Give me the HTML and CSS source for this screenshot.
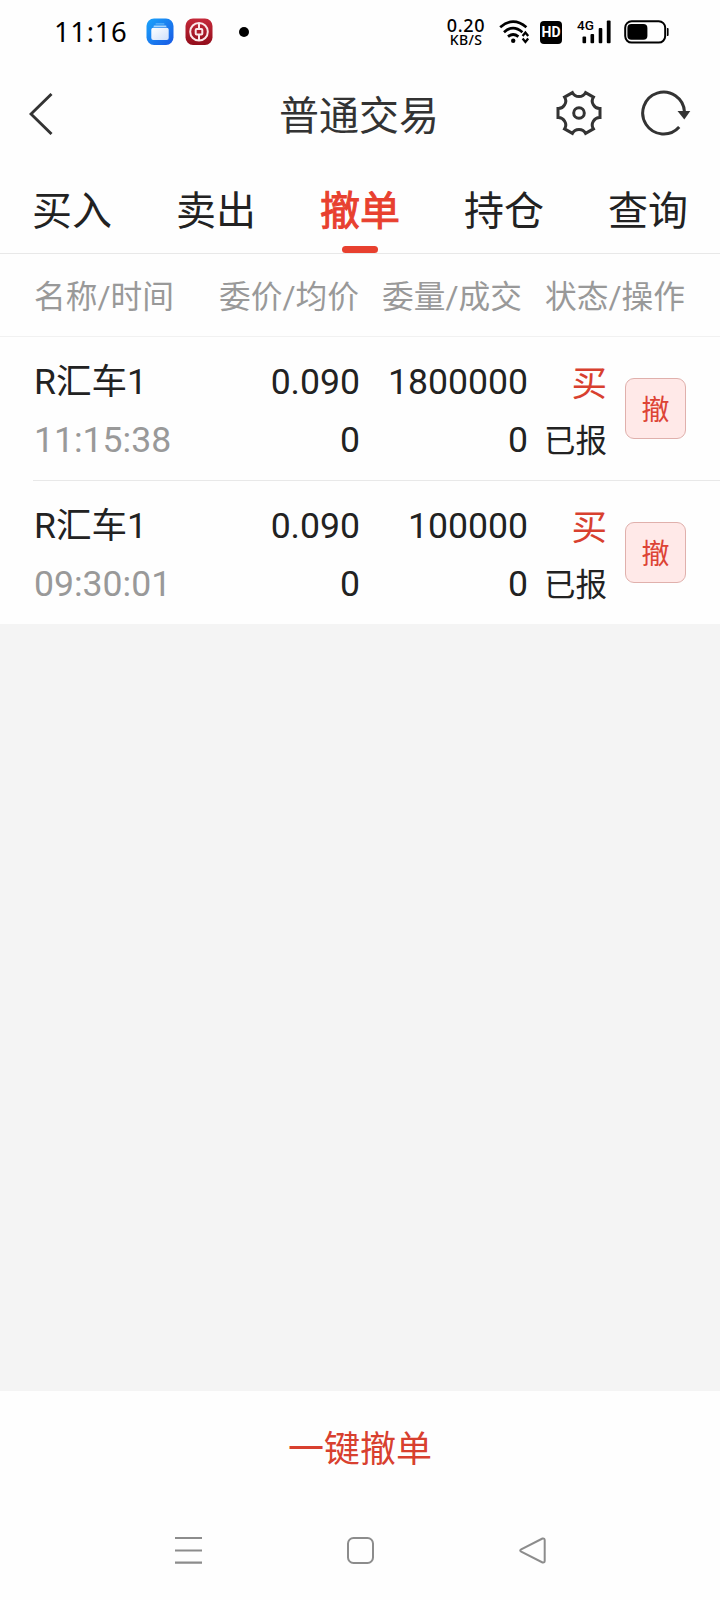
FILE: index.html
```
<!DOCTYPE html>
<html lang="zh-CN">
<head>
<meta charset="utf-8">
<title>普通交易</title>
<link rel="stylesheet" href="styles.css">
</head>
<body>
<div class="screen">
  <div class="status">
    <span class="clock">11:16</span>
    <svg class="app-icon files" width="28" height="28" viewBox="0 0 28 28">
      <defs>
        <linearGradient id="blue" x1="0" y1="0" x2="1" y2="1"><stop offset="0" stop-color="#1ba4fb"/><stop offset="1" stop-color="#1858e4"/></linearGradient>
        <linearGradient id="paper" x1="0" y1="0" x2="1" y2="1"><stop offset="0" stop-color="#fff"/><stop offset="1" stop-color="#cfe0fb"/></linearGradient>
      </defs>
      <rect x="0.5" y="0.5" width="27" height="26.5" rx="7.5" fill="url(#blue)"/>
      <rect x="9.5" y="5.3" width="9" height="1.2" rx="0.6" fill="#5fb6fb"/>
      <rect x="7.5" y="7.4" width="13" height="1.7" rx="0.8" fill="#a9d7fd"/>
      <rect x="5.3" y="9.8" width="17.4" height="12.2" rx="2" fill="url(#paper)"/>
    </svg>
    <svg class="app-icon bank" width="28" height="28" viewBox="0 0 28 28">
      <defs><linearGradient id="red" x1="0" y1="0" x2="0" y2="1"><stop offset="0" stop-color="#c5293a"/><stop offset="1" stop-color="#920d1b"/></linearGradient></defs>
      <rect x="0.5" y="0.5" width="27" height="26.5" rx="7.5" fill="url(#red)"/>
      <g fill="none" stroke="#fbe9ea">
        <circle cx="14" cy="13.8" r="8.8" stroke-width="2"/>
        <rect x="10.7" y="11" width="6.6" height="5.600" rx="1" stroke-width="2"/>
        <path d="M14 5v5.9M14 16.7v5.9" stroke-width="2"/>
      </g>
    </svg>
    <span class="dot"></span>
    <span class="speed"><b class="rate">0.20</b><b class="unit">KB/S</b></span>
    <svg class="wifi" width="32" height="26" viewBox="0 0 32 26">
      <g fill="none" stroke="#000" stroke-width="2.7">
        <path d="M1.2 8.2Q14 -3 27.4 8.2"/>
        <path d="M5 13.2Q14 5 23.4 13.2"/>
        <path d="M9 17.6Q14 13.4 19.4 17.6"/>
      </g>
      <circle cx="14.2" cy="21.8" r="2.2"/>
      <path d="M23.6 17l2.800-3.400 2.800 3.400M23.600 19.600l2.800 3.400 2.800-3.400" fill="none" stroke="#000" stroke-width="2.300"/>
    </svg>
    <span class="hd">HD</span>
    <span class="signal">
      <svg width="34" height="24" viewBox="0 0 34 24"><g><rect x="5.500" y="16.600" width="3.600" height="6.600" rx="1"/><rect x="13.500" y="14" width="3.600" height="9.200" rx="1"/><rect x="21.700" y="8" width="3.600" height="15.200" rx="1"/><rect x="29.800" y="0.400" width="3.800" height="22.800" rx="1"/></g></svg>
      <span class="gen">4G</span>
    </span>
    <svg class="battery" width="45" height="24" viewBox="0 0 45 24">
      <rect x="1.2" y="1.2" width="40" height="21.4" rx="6.5" fill="none" stroke="#000" stroke-width="2"/>
      <rect x="3.4" y="4" width="20" height="15.8" rx="4"/>
      <path d="M43 8h.6q1 0 1 1v6q0 1-1 1H43z"/>
    </svg>
  </div>

  <div class="navbar">
    <svg class="back" width="24" height="42" viewBox="0 0 24 42"><path d="M22.5 1L2 21l20.500 20" fill="none" stroke="#333" stroke-width="2.900"/></svg>
    <h1 class="title">普通交易</h1>
    <svg class="gear" width="46" height="46" viewBox="-23 -23 46 46">
      <g fill="none" stroke="#333" stroke-width="3">
        <path d="M-6.600 -20.400C-4 -15.200 4 -15.200 6.600 -20.400L14.400 -15.900C11.200 -11 15.200 -4.200 21 -4.500V4.500C15.200 4.200 11.200 11 14.400 15.900L6.600 20.400C4 15.200 -4 15.200 -6.600 20.400L-14.400 15.900C-11.200 11 -15.200 4.200 -21 4.500V-4.500C-15.200 -4.200 -11.200 -11 -14.400 -15.900Z"/>
        <circle r="5.300"/>
      </g>
    </svg>
    <svg class="reload" width="50" height="46" viewBox="0 0 50 46">
      <path d="M38.200 37A20.900 20.900 0 1 1 43.500 22" fill="none" stroke="#333" stroke-width="3"/>
      <path d="M36.500 21h12.800l-6 8.400z" fill="#333"/>
    </svg>
  </div>

  <div class="tabs">
    <span class="tab">买入</span>
    <span class="tab">卖出</span>
    <span class="tab active">撤单</span>
    <span class="tab">持仓</span>
    <span class="tab">查询</span>
  </div>

  <div class="head">
    <span class="h-name">名称/时间</span>
    <span class="h-price">委价/均价</span>
    <span class="h-amount">委量/成交</span>
    <span class="h-state">状态/操作</span>
  </div>

  <div class="order">
    <div class="col name"><span>R汇车1</span><span class="time">11:15:38</span></div>
    <div class="col price"><span>0.090</span><span>0</span></div>
    <div class="col amount"><span>1800000</span><span>0</span></div>
    <div class="col state"><span class="buy">买</span><span class="reported">已报</span></div>
    <button class="cancel">撤</button>
  </div>
  <div class="order last">
    <div class="col name"><span>R汇车1</span><span class="time">09:30:01</span></div>
    <div class="col price"><span>0.090</span><span>0</span></div>
    <div class="col amount"><span>100000</span><span>0</span></div>
    <div class="col state"><span class="buy">买</span><span class="reported">已报</span></div>
    <button class="cancel">撤</button>
  </div>

  <div class="empty"></div>
  <div class="cancel-all">一键撤单</div>
  <div class="sysnav">
    <svg width="28" height="28" viewBox="0 0 28 28"><path d="M1 1h27M1 13.500h27M1 25.700h27" stroke="#8c8c8c" stroke-width="2.200"/></svg>
    <svg width="28" height="28" viewBox="0 0 28 28"><rect x="1" y="1" width="25" height="25" rx="5.500" fill="none" stroke="#8c8c8c" stroke-width="2"/></svg>
    <svg width="28" height="28" viewBox="0 0 28 28"><path d="M23.500 1.500L2.200 12.300Q.2 13.500 2.200 14.700L23.500 25.500Q25.700 26 25.700 23.800V3.200Q25.700 1 23.500 1.500Z" fill="none" stroke="#8c8c8c" stroke-width="2"/></svg>
  </div>
</div>
</body>
</html>
```
FILE: styles.css
```
* { box-sizing: border-box; }
body { margin: 0; background: #fff; font-family: Roboto, "Noto Sans CJK SC", sans-serif; color: #222; }
svg { display: block; flex: none; }
.screen { width: 720px; height: 1600px; display: flex; flex-direction: column; background: #fefefe; overflow: hidden; }

.status { height: 64px; display: flex; align-items: center; padding-left: 54px; color: #000; flex: none; }
.clock { width: 92px; font: 400 27.5px/40px "Noto Sans", sans-serif; letter-spacing: .6px; }
.files { margin-right: 11px; }
.dot { width: 10px; height: 10px; border-radius: 50%; background: #000; margin-left: 26px; }
.speed { width: 40px; margin-left: 197px; display: flex; flex-direction: column; align-items: center; font-family: "Noto Sans", sans-serif; }
.rate, .unit { font-weight: 500; }
.rate { font-size: 18px; line-height: 16px; letter-spacing: .7px; }
.unit { font-size: 14px; line-height: 14px; letter-spacing: .4px; }
.wifi { margin-left: 13px; }
.hd { width: 22px; height: 23px; margin-left: 9px; border-radius: 4px; background: #000; color: #fff; font: 700 14px/23px Roboto, sans-serif; text-align: center; }
.signal { position: relative; margin-left: 15px; }
.gen { position: absolute; left: 0; top: -1px; font: 500 13.5px/13px Roboto, sans-serif; }
.battery { margin-left: 13px; }

.navbar { height: 98px; display: flex; align-items: center; padding-left: 29px; flex: none; }
.back { margin-top: 2px; }
.title { margin: 8px 0 0 226px; width: 161px; font-size: 40px; line-height: 60px; font-weight: 400; color: #333; }
.gear { margin-left: 116px; }
.reload { margin-left: 39px; }

.tabs { height: 92px; display: flex; justify-content: space-between; padding: 0 32px; border-bottom: 1px solid #e8e8e8; flex: none; }
.tab { position: relative; padding-top: 8px; font-size: 40px; line-height: 83px; }
.active { color: #e8402f; -webkit-text-stroke: 1px #e8402f; }
.active::after { content: ""; position: absolute; left: 22px; bottom: 0; width: 36px; height: 7px; border-radius: 4px; background: #e8402f; }

.head { height: 83px; display: flex; padding: 2px 0 0 34px; border-bottom: 1px solid #f1f1f1; color: #999; font-size: 31.7px; line-height: 84px; flex: none; }
.head span { white-space: nowrap; }
.h-name { width: 185px; }
.h-price { width: 163px; }
.h-amount { width: 163px; }

.order { position: relative; height: 144px; margin-left: 33px; padding-top: 16px; display: flex; border-bottom: 1px solid #e8e8e8; flex: none; }
.order.last { border-bottom: 0; height: 143px; }
.col { display: flex; flex-direction: column; font-size: 35.6px; line-height: 58px; white-space: nowrap; }
.name { width: 147px; padding-left: 1px; }
.time { color: #999; }
.price { width: 180px; text-align: right; }
.amount { width: 168px; text-align: right; }
.state { width: 79px; padding-top: 2px; text-align: right; }
.buy { color: #d8402f; }
.reported { font-size: 31.5px; line-height: 57px; }
.cancel { width: 61px; height: 61px; margin: 25px 0 0 18px; padding: 5px 0 0; border: 1px solid #e0b0ac; border-radius: 9px; background: #ffe9e8; color: #dd4335; font: 28px/54px Roboto, "Noto Sans CJK SC", sans-serif; }

.empty { flex: 1; background: #f4f4f4; }
.cancel-all { height: 115px; padding-top: 4px; text-align: center; font-size: 36px; line-height: 111px; color: #d8402f; flex: none; }
.sysnav { height: 94px; display: flex; padding: 31px 173px 0 174px; justify-content: space-between; flex: none; }
```
